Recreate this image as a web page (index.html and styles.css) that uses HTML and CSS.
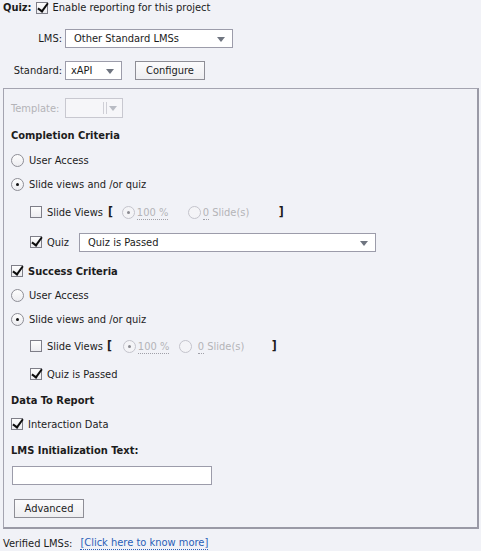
FILE: index.html
```html
<!DOCTYPE html>
<html>
<head>
<meta charset="utf-8">
<link rel="stylesheet" href="styles.css">
</head>
<body>
<div class="page">
  <div class="row r-top">
    <span class="bold">Quiz:</span>
    <span class="cb checked"></span>
    <span class="lbl">Enable reporting for this project</span>
  </div>
  <div class="row r-lms">
    <span class="flabel">LMS:</span>
    <div class="select w-lms"><span class="sv">Other Standard LMSs</span><span class="arrow"></span></div>
  </div>
  <div class="row r-std">
    <span class="flabel">Standard:</span>
    <div class="select w-std"><span class="sv">xAPI</span><span class="arrow"></span></div>
    <div class="btn btn-conf">Configure</div>
  </div>

  <div class="box">
    <div class="row r-tpl">
      <span class="flabel dis">Template:</span>
      <div class="select w-tpl dis-sel"><span class="sep"></span><span class="arrow light"></span></div>
    </div>
    <div class="row mt7"><span class="bold">Completion Criteria</span></div>
    <div class="row mt5"><span class="rb"></span><span class="lbl">User Access</span></div>
    <div class="row mt4"><span class="rb on"></span><span class="lbl">Slide views and /or quiz</span></div>
    <div class="row mt8 ind">
      <span class="cb"></span><span class="lbl">Slide Views</span>
      <span class="brk b1">[</span>
      <span class="rb on dis-rb"></span><span class="lbl dis u100"><span class="dot">100 %</span></span>
      <span class="rb dis-rb"></span><span class="lbl dis s0"><span class="dot">0</span> Slide(s)</span>
      <span class="brk">]</span>
    </div>
    <div class="row mt10 ind">
      <span class="cb checked"></span><span class="lbl">Quiz</span>
      <div class="select w-quiz"><span class="sv">Quiz is Passed</span><span class="arrow"></span></div>
    </div>
    <div class="row mt9"><span class="cb checked"></span><span class="bold lbl">Success Criteria</span></div>
    <div class="row mt4"><span class="rb"></span><span class="lbl">User Access</span></div>
    <div class="row mt4"><span class="rb on"></span><span class="lbl">Slide views and /or quiz</span></div>
    <div class="row mt7 ind">
      <span class="cb"></span><span class="lbl">Slide Views</span>
      <span class="brk b1b">[</span>
      <span class="rb on dis-rb"></span><span class="lbl dis u100b"><span class="dot">100 %</span></span>
      <span class="rb dis-rb"></span><span class="lbl dis s0b"><span class="dot">0</span> Slide(s)</span>
      <span class="brk">]</span>
    </div>
    <div class="row mt8 ind"><span class="cb checked"></span><span class="lbl">Quiz is Passed</span></div>
    <div class="row mt6"><span class="bold">Data To Report</span></div>
    <div class="row mt4"><span class="cb checked"></span><span class="lbl">Interaction Data</span></div>
    <div class="row mt6"><span class="bold">LMS Initialization Text:</span></div>
    <div class="input"></div>
    <div class="btn btn-adv">Advanced</div>
  </div>

  <div class="row r-ver">
    <span class="lbl0">Verified LMSs:</span>
    <span class="link">[Click here to know more]</span>
  </div>
</div>
</body>
</html>
```
FILE: styles.css
```css
html, body {
  margin: 0;
  padding: 0;
  background: #f1f2f7;
}
body {
  font-family: "DejaVu Sans Condensed", "DejaVu Sans", "Liberation Sans", sans-serif;
  font-stretch: condensed;
  font-size: 11px;
  color: #1c1c1c;
  width: 481px;
  height: 551px;
  overflow: hidden;
}
.page {
  padding: 0 3px;
}
.row {
  display: flex;
  align-items: center;
  height: 20px;
  white-space: nowrap;
}
.bold { font-weight: bold; }
.lbl { margin-left: 5px; }
.dis { color: #b4b4b8; }

.r-top { height: 15px; }
.r-top .cb { margin-left: 4px; }
.r-lms { margin-top: 14px; height: 19px; }
.r-std { margin-top: 13px; height: 19px; }
.flabel {
  box-sizing: border-box;
  width: 62px;
  text-align: right;
  padding-right: 3px;
}

.select {
  position: relative;
  box-sizing: border-box;
  height: 19px;
  border: 1px solid #9c9caa;
  background: #ffffff;
  display: flex;
  align-items: center;
}
.sv { padding-left: 8px; }
.arrow {
  position: absolute;
  right: 7px;
  top: 7px;
  width: 0;
  height: 0;
  border-left: 4px solid transparent;
  border-right: 4px solid transparent;
  border-top: 5px solid #6f7580;
}
.arrow.light { border-top-color: #b9bcc4; right: 5px; }
.w-lms { width: 168px; }
.w-std { width: 57px; }
.w-std .sv { padding-left: 5px; }
.w-tpl { width: 58px; height: 20px; }
.dis-sel { border-color: #c8c8d0; background: #f6f6f9; }
.sep {
  position: absolute;
  left: 37px;
  top: 3px;
  width: 2px;
  height: 12px;
  border-left: 1px solid #cfcfd6;
  border-right: 1px solid #cfcfd6;
}
.w-quiz { width: 297px; margin-left: 10px; }

.btn {
  box-sizing: border-box;
  height: 19px;
  border: 1px solid #8e8e96;
  background: linear-gradient(#fbfbfc, #eeeef1);
  display: flex;
  align-items: center;
  justify-content: center;
}
.btn-conf { width: 70px; margin-left: 13px; }
.btn-adv { width: 70px; margin-left: 3px; margin-top: 14px; }

.box {
  margin-top: 8px;
  box-sizing: border-box;
  width: 476px;
  height: 441px;
  border: 1px solid #a4a4b0;
  border-right: 2px solid #9a9aa6;
  border-bottom: 2px solid #9a9aa6;
  padding: 9px 0 0 7px;
}
.r-tpl .flabel { width: 54px; text-align: left; padding-right: 0; }

.mt4 { margin-top: 4px; }
.mt5 { margin-top: 5px; }
.mt6 { margin-top: 6px; }
.mt7 { margin-top: 7px; }
.mt8 { margin-top: 8px; }
.mt9 { margin-top: 9px; }
.mt10 { margin-top: 10px; }
.ind { padding-left: 19px; }

.cb {
  position: relative;
  box-sizing: border-box;
  width: 12px;
  height: 12px;
  flex: none;
  border: 1px solid #7e7e88;
  background: linear-gradient(#fdfdfd, #ececf0);
}
.cb.checked::after {
  content: "";
  position: absolute;
  left: 3px;
  top: -2px;
  width: 4px;
  height: 9px;
  border-right: 2px solid #0c0c0c;
  border-bottom: 2px solid #0c0c0c;
  transform: rotate(36deg);
}
.rb {
  position: relative;
  box-sizing: border-box;
  width: 13px;
  height: 13px;
  flex: none;
  border: 1px solid #8e8e96;
  border-radius: 50%;
  background: linear-gradient(#fdfdfd, #ececf0);
}
.rb.on::after {
  content: "";
  position: absolute;
  left: 4px;
  top: 4px;
  width: 3px;
  height: 3px;
  border-radius: 50%;
  background: #111;
}
.rb.dis-rb { border-color: #c4c4cc; background: #f4f4f7; }
.rb.dis-rb.on::after { background: #8a8a90; }

.brk { font-weight: bold; font-size: 12px; }
.b1 { margin-left: 5px; margin-right: 9px; }
.b1b { margin-left: 4px; margin-right: 11px; }
.dot { border-bottom: 1px dotted #a0a0a8; line-height: 12px; }
.u100 { width: 51px; margin-left: 2px; }
.u100b { width: 41px; margin-left: 2px; }
.s0 { width: 76px; margin-left: 2px; }
.s0b { width: 74px; margin-left: 6px; }

.input {
  box-sizing: border-box;
  width: 200px;
  height: 19px;
  margin-top: 6px;
  margin-left: 1px;
  border: 1px solid #9c9caa;
  background: #fff;
}

.r-ver { margin-top: 4px; height: 20px; }
.link {
  margin-left: 8px;
  color: #2a5fb8;
  border-bottom: 1px dotted #2a5fb8;
  line-height: 12px;
}
```
